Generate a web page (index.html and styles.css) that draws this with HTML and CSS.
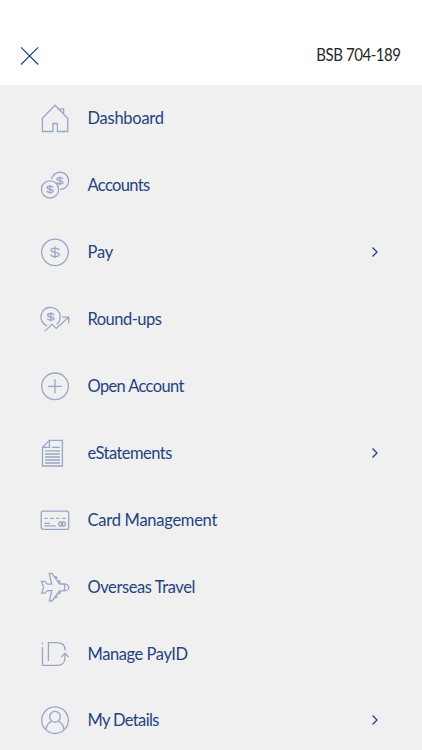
FILE: index.html
```html
<!DOCTYPE html>
<html lang="en">

<head>
    <meta charset="UTF-8">
    <meta name="viewport" content="width=device-width, initial-scale=1.0">
    <title>Menu</title>
    <link rel="stylesheet" href="styles.css">
</head>

<body>
    <header class="top-bar">
        <svg class="close" viewBox="0 0 20 20"><path d="M1 1.3L18.2 18.5M18.2 1.3L1 18.5"/></svg>
        <span class="bsb">BSB 704-189</span>
    </header>

    <!-- dollar sign, shared by the coin icons -->
    <svg class="defs">
        <symbol id="dollar" viewBox="0 0 12 14">
            <path vector-effect="non-scaling-stroke" d="M10.6 4.4C10 2.9 8.4 2.3 6 2.3C3.3 2.3 1.6 3.1 1.6 4.7C1.6 6.2 3.3 6.6 6 7C8.8 7.4 10.6 7.9 10.6 9.4C10.6 11 8.8 11.7 6 11.7C3.4 11.7 1.8 11 1.2 9.4M6 .4V13.6"/>
        </symbol>
    </svg>

    <nav class="menu">
        <a class="item">
            <svg class="icon" viewBox="0 0 30 30"><path d="M2.4 15.2L15 2.3L27.7 15.2V28.5H17.4V20.5H13V28.5H2.4ZM20.2 7.4V5.8H23.6V11"/></svg>
            <span class="label mid">Dashboard</span>
        </a>
        <a class="item">
            <svg class="icon" viewBox="0 0 30 30">
                <circle cx="10" cy="19.4" r="8.6"/>
                <path d="M11.6 9.2A8.6 8.6 0 1 1 20.3 19.4"/>
                <use href="#dollar" x="6" y="14.7" width="8" height="9.4"/>
                <use href="#dollar" x="15.9" y="6.1" width="8" height="9.4"/>
            </svg>
            <span class="label tight">Accounts</span>
        </a>
        <a class="item">
            <svg class="icon" viewBox="0 0 30 30">
                <circle cx="15" cy="15.4" r="13.3"/>
                <use href="#dollar" x="9.5" y="9" width="11" height="12.8"/>
            </svg>
            <span class="label mid">Pay</span>
            <svg class="arrow" viewBox="0 0 8 12"><path d="M1.5 1.5L6 6L1.5 10.5"/></svg>
        </a>
        <a class="item">
            <svg class="icon" viewBox="0 0 30 30">
                <path d="M7 21.9A9.6 9.6 0 1 1 16.7 20.4M4.6 27.4L12 20.3L16.2 24.4L28.5 13.4M22.2 13.2H28.7V19.6"/>
                <use href="#dollar" x="6.5" y="7.9" width="8.4" height="9.8"/>
            </svg>
            <span class="label snug">Round-ups</span>
        </a>
        <a class="item">
            <svg class="icon" viewBox="0 0 30 30"><circle cx="15" cy="15.3" r="13.3"/><path d="M8 15.3H22M15 8.3V22.3"/></svg>
            <span class="label tight">Open Account</span>
        </a>
        <a class="item">
            <svg class="icon" viewBox="0 0 30 30"><path d="M2.5 9.3L9.4 2.4H22.4V28H2.5ZM2.5 9.3H9.4V2.4M12 9.3H20M5 12.9H20M5 16H20M5 19H20M5 22H20M5 25H20"/></svg>
            <span class="label snug">eStatements</span>
            <svg class="arrow" viewBox="0 0 8 12"><path d="M1.5 1.5L6 6L1.5 10.5"/></svg>
        </a>
        <a class="item">
            <svg class="icon" viewBox="0 0 30 30">
                <rect x="1.2" y="6.2" width="27.5" height="18.2" rx="2"/>
                <path d="M4.3 13.4H7.7M10.3 13.4H13.7M16.2 13.4H19.5M22.3 13.4H25.7M4.3 18.4H10M4.3 20.8H15.7"/>
                <circle cx="20.6" cy="19" r="2"/><circle cx="23.4" cy="19" r="2"/>
            </svg>
            <span class="label mid">Card Management</span>
        </a>
        <a class="item">
            <svg class="icon" viewBox="0 0 30 30">
                <path d="M9.3 1.4H12L19.6 12H24.2C26.8 12 28.8 13.6 28.8 15.4C28.8 17.2 26.8 18.8 24.2 18.8H19.6L12 29H9.3L11.8 18.6H7.5L4.7 21.2H1.6L3.6 15.4L1.6 9.4H4.7L7.5 12.2H11.8ZM14.4 4.6H15.8C17.3 4.6 17.3 6.9 15.8 6.9M17.6 8.8H19C20.5 8.8 20.5 11.1 19 11.1M14.4 25.9H15.8C17.3 25.9 17.3 23.6 15.8 23.6M17.6 21.8H19C20.5 21.8 20.5 19.5 19 19.5M24.2 12.2Q25.8 15.4 24.2 18.6"/>
            </svg>
            <span class="label loose">Overseas Travel</span>
        </a>
        <a class="item">
            <svg class="icon" viewBox="0 0 30 30"><path d="M2.5 3.5V5.6M2.5 8.3V26.4H17.3C22.2 26.4 25 23.4 25 19V14.6M21.2 18L25 14.4L28.8 18M8.4 22V3.6H16.5C21.6 3.6 25.2 6.2 25.2 11.2"/></svg>
            <span class="label loose">Manage PayID</span>
        </a>
        <a class="item">
            <svg class="icon" viewBox="0 0 30 30"><circle cx="15" cy="15.2" r="13.3"/><circle cx="15" cy="11.8" r="5.4"/><path d="M6 25C6.2 20.4 8.4 17.7 11.6 16.3M18.4 16.3C21.6 17.7 23.8 20.4 24 25"/></svg>
            <span class="label tight">My Details</span>
            <svg class="arrow" viewBox="0 0 8 12"><path d="M1.5 1.5L6 6L1.5 10.5"/></svg>
        </a>
    </nav>
</body>

</html>
```

FILE: styles.css
```css
* {
    box-sizing: border-box;
}

body {
    margin: 0;
    height: 750px;
    overflow: hidden;
    background-color: #f0f0f0;
    font-family: Lato, "Liberation Sans", sans-serif;
    font-size: 16.5px;
}

svg {
    fill: none;
    flex-shrink: 0;
}

.defs {
    display: none;
}

.top-bar {
    height: 85px;
    padding: 26px 21px 0 20px;
    display: flex;
    align-items: center;
    justify-content: space-between;
    background-color: #fff;
}

.close {
    width: 20px;
    height: 20px;
    stroke: #1f4380;
    stroke-width: 1.2;
}

.bsb {
    color: #262626;
    letter-spacing: -0.5px;
    padding-bottom: 2px;
    transform: scaleX(0.91);
    transform-origin: right;
}

.menu {
    display: flex;
    flex-direction: column;
}

.item {
    height: 66.9px;
    padding: 0 43px 0 40px;
    display: flex;
    align-items: center;
    color: #1f4380;
}

.icon {
    width: 30px;
    height: 30px;
    margin-right: 17.5px;
    stroke: #98a7c5;
    stroke-width: 1.3;
}

.label {
    flex: 1;
}

.mid {
    letter-spacing: -0.26px;
}

.loose {
    letter-spacing: -0.42px;
}

.snug {
    letter-spacing: -0.53px;
}

.tight {
    letter-spacing: -0.64px;
}

.arrow {
    width: 8px;
    height: 12px;
    stroke: #1f4380;
    stroke-width: 1.3;
}
```
